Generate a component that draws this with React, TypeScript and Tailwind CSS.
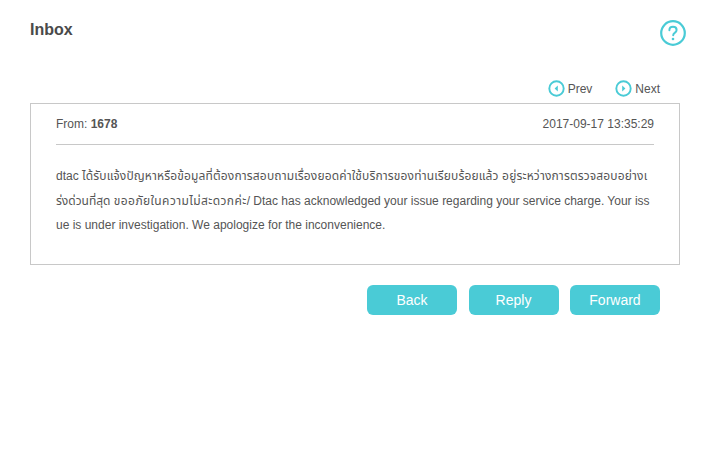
function PageIcon({ dir }: { dir: "prev" | "next" }) {
  return (
    <svg width="17" height="17" viewBox="0 0 17 17" fill="none">
      <circle cx="8.5" cy="8.5" r="7.2" stroke="#4acbd6" strokeWidth="1.9" />
      <path d={dir === "prev" ? "M9.8 5.6 6.6 8.5l3.2 2.9z" : "M7.2 5.6l3.2 2.9-3.2 2.9z"} fill="#4acbd6" />
    </svg>
  );
}

function ActionButton({ label }: { label: string }) {
  return (
    <button className="w-[90px] h-[30px] rounded-[6px] bg-[#4acbd6] text-white text-[14px] leading-[30px] text-center">
      {label}
    </button>
  );
}

export default function App() {
  return (
    <div className="w-[710px] h-[462px] bg-white text-[#555] font-['Liberation_Sans','Noto_Sans_Thai','Noto_Sans',sans-serif] overflow-hidden">
      <div className="flex justify-between pl-[30px] pr-[24px] pt-[20px]">
        <h1 className="text-[16px] leading-[18px] mt-[1px] font-bold text-[#4a4a4a]">Inbox</h1>
        <svg width="26" height="26" viewBox="0 0 26 26" fill="none">
          <circle cx="13" cy="13" r="11.8" stroke="#4acbd6" strokeWidth="2.2" />
          <path
            d="M9.4 10.2c0-2.1 1.5-3.4 3.6-3.4s3.6 1.2 3.6 3.1c0 1.5-.8 2.2-1.9 3-.9.6-1.5 1.2-1.5 2.4"
            stroke="#4acbd6"
            strokeWidth="2"
            strokeLinecap="round"
          />
          <circle cx="13" cy="19" r="1.3" fill="#4acbd6" />
        </svg>
      </div>

      <div className="flex justify-end gap-[23px] pr-[50px] mt-[34px] h-[23px] text-[12px] items-start">
        <div className="flex items-center gap-[3px] h-[17px]">
          <PageIcon dir="prev" />
          <span>Prev</span>
        </div>
        <div className="flex items-center gap-[3px] h-[17px]">
          <PageIcon dir="next" />
          <span>Next</span>
        </div>
      </div>

      <div className="mx-[30px] w-[650px] h-[162px] border border-[#c8c8c8] px-[25px]">
        <div className="flex justify-between h-[41px] items-center border-b border-[#c8c8c8] text-[12px]">
          <span>
            From: <b>1678</b>
          </span>
          <span>2017-09-17 13:35:29</span>
        </div>
        <div className="mt-[19px] text-[12px] leading-[24.5px] whitespace-nowrap">
          <div>
            dtac{" "}
            <span className="tracking-[0.15px]">
              ได้รับแจ้งปัญหาหรือข้อมูลที่ต้องการสอบถามเรื่องยอดค่าใช้บริการของท่านเรียบร้อยแล้ว อยู่ระหว่างการตรวจสอบอย่างเ
            </span>
          </div>
          <div>
            ร่งด่วนที่สุด <span className="tracking-[0.4px]">ขออภัยในความไม่สะดวกค่ะ</span>/ Dtac has acknowledged your
            issue regarding your service charge. Your iss
          </div>
          <div>ue is under investigation. We apologize for the inconvenience.</div>
        </div>
      </div>

      <div className="flex justify-end gap-[11.5px] pr-[50px] mt-[20px]">
        <ActionButton label="Back" />
        <ActionButton label="Reply" />
        <ActionButton label="Forward" />
      </div>
    </div>
  );
}
